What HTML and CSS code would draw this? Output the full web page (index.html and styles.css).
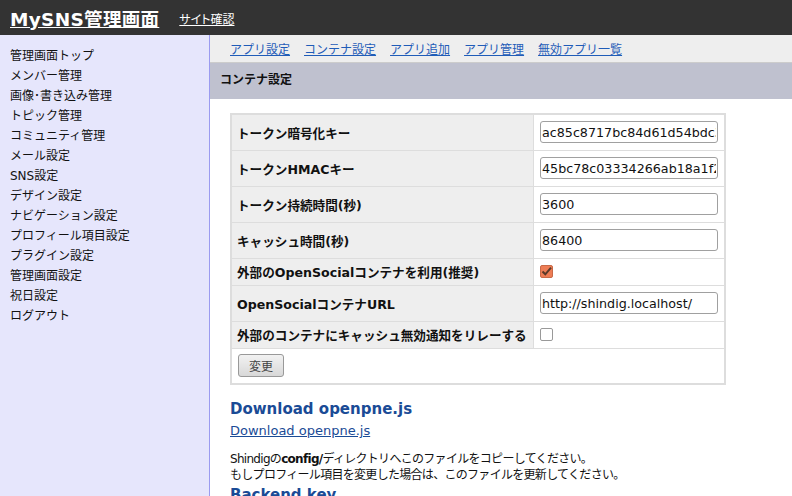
FILE: index.html
```html
<!DOCTYPE html>
<html lang="ja">
<head>
<meta charset="utf-8">
<link rel="stylesheet" href="styles.css">
</head>
<body>
<header class="topbar">
  <a class="brand" href="#">MySNS管理画面</a>
  <a class="sitelink" href="#">サイト確認</a>
</header>
<div class="layout">
  <nav class="side">
    <ul>
      <li><a href="#">管理画面トップ</a></li>
      <li><a href="#">メンバー管理</a></li>
      <li><a href="#">画像･書き込み管理</a></li>
      <li><a href="#" class="cur">トピック管理</a></li>
      <li><a href="#">コミュニティ管理</a></li>
      <li><a href="#">メール設定</a></li>
      <li><a href="#">SNS設定</a></li>
      <li><a href="#">デザイン設定</a></li>
      <li><a href="#">ナビゲーション設定</a></li>
      <li><a href="#">プロフィール項目設定</a></li>
      <li><a href="#">プラグイン設定</a></li>
      <li><a href="#">管理画面設定</a></li>
      <li><a href="#">祝日設定</a></li>
      <li><a href="#">ログアウト</a></li>
    </ul>
  </nav>
  <main class="main">
    <div class="subnav">
      <a href="#">アプリ設定</a>
      <a href="#">コンテナ設定</a>
      <a href="#">アプリ追加</a>
      <a href="#">アプリ管理</a>
      <a href="#">無効アプリ一覧</a>
    </div>
    <h2 class="pagetitle">コンテナ設定</h2>
    <div class="content">
      <table class="form">
        <tr><th>トークン暗号化キー</th><td><input class="txt" type="text" value="ac85c8717bc84d61d54bdc3f0a"></td></tr>
        <tr><th>トークンHMACキー</th><td><input class="txt" type="text" value="45bc78c03334266ab18a1f2e90"></td></tr>
        <tr><th>トークン持続時間(秒)</th><td><input class="txt" type="text" value="3600"></td></tr>
        <tr><th>キャッシュ時間(秒)</th><td><input class="txt" type="text" value="86400"></td></tr>
        <tr class="chk"><th>外部のOpenSocialコンテナを利用(推奨)</th><td><span class="box on"><svg width="13" height="13" viewBox="0 0 13 13"><path d="M2.5 6.5 L5.3 9.3 L11 2.6" fill="none" stroke="#5a3a2a" stroke-width="2"/></svg></span></td></tr>
        <tr><th>OpenSocialコンテナURL</th><td><input class="txt" type="text" value="http://shindig.localhost/"></td></tr>
        <tr class="chk"><th>外部のコンテナにキャッシュ無効通知をリレーする</th><td><span class="box"></span></td></tr>
        <tr class="submit"><td colspan="2"><button class="btn" type="button">変更</button></td></tr>
      </table>
      <h3 class="sub">Download openpne.js</h3>
      <p class="dl"><a href="#">Download openpne.js</a></p>
      <p class="note">Shindigの<b>config/</b>ディレクトリへこのファイルをコピーしてください。<br>もしプロフィール項目を変更した場合は、このファイルを更新してください。</p>
      <h3 class="sub">Backend key</h3>
    </div>
  </main>
</div>
</body>
</html>
```
FILE: styles.css
```css
html, body { margin: 0; padding: 0; }
body {
  font-family: "DejaVu Sans", "Noto Sans CJK JP", sans-serif;
  font-size: 12px;
  color: #111;
  background: #fff;
  overflow: hidden;
  height: 496px;
}
.topbar {
  height: 35px;
  background: #333333;
  display: flex;
  align-items: center;
  padding-left: 10px;
  box-sizing: border-box;
}
.brand {
  color: #fff;
  font-size: 18.5px;
  font-weight: bold;
  text-decoration: underline;
  letter-spacing: 0.3px;
  margin-right: 20px;
}
.sitelink {
  color: #fff;
  font-size: 12px;
  text-decoration: underline;
  margin-top: 2px;
  font-feature-settings: "palt";
}
.layout {
  display: flex;
  height: 461px;
}
.side {
  width: 209px;
  background: #e6e6fc;
  border-right: 1px solid #9b9bf0;
  flex-shrink: 0;
}
.side ul {
  list-style: none;
  margin: 0;
  padding: 11px 0 0 10px;
}
.side li {
  height: 20px;
  line-height: 20px;
}
.side a {
  color: #111;
  text-decoration: none;
  font-size: 12px;
}
.side a.cur::first-letter { color: #8a1010; }
.main {
  flex: 1;
  min-width: 0;
}
.subnav {
  height: 27px;
  background: #eeeeee;
  border-bottom: 1px solid #cccccc;
  display: flex;
  align-items: center;
  gap: 14px;
  padding-left: 20px;
}
.subnav a {
  color: #1f5cb8;
  font-size: 12px;
  text-decoration: underline;
  white-space: nowrap;
}
.pagetitle {
  margin: 0;
  height: 36px;
  line-height: 34px;
  background: #bfc1cf;
  font-size: 12px;
  font-weight: bold;
  padding-left: 10px;
}
.content {
  padding: 14px 20px 0 20px;
}
.form {
  border-collapse: collapse;
  border: 2px solid #dddddd;
  width: 496px;
}
.form th, .form td {
  border: 1px solid #dddddd;
  height: 36px;
  box-sizing: border-box;
  padding: 0 6px;
}
.form th {
  background: #eeeeee;
  text-align: left;
  font-size: 12.6px;
  font-weight: bold;
  width: 304px;
  padding: 0 4px 0 5px;
  white-space: nowrap;
}
.form td { padding-left: 6px; }
.form tr.chk th, .form tr.chk td { height: 27px; }
.form tr.submit td { height: 36px; background: #fff; }
.txt {
  width: 178px;
  height: 22px;
  box-sizing: border-box;
  border: 1px solid #a0a0a0;
  border-radius: 3px;
  font-family: "DejaVu Sans", sans-serif;
  font-size: 12.7px;
  padding: 0 1px;
  color: #111;
  display: block;
}
.box {
  display: block;
  width: 13px;
  height: 13px;
  box-sizing: border-box;
  border: 1px solid #999;
  border-radius: 2px;
  background: #fff;
  position: relative;
}
.box.on {
  background: #ee7d55;
  border-color: #c86a48;
}
.box svg { position: absolute; left: -1px; top: -1px; }
.btn {
  font-family: "DejaVu Sans", "Noto Sans CJK JP", sans-serif;
  font-size: 12px;
  color: #444;
  background: linear-gradient(#f2f2f2, #d8d8d8);
  border: 1px solid #999;
  border-radius: 3px;
  height: 23px;
  padding: 0 10px;
}
.sub {
  margin: 15px 0 0 0;
  font-size: 15px;
  font-weight: bold;
  color: #1a4b96;
}
.dl {
  margin: 5px 0 0 0;
  font-size: 13px;
}
.dl a { color: #1a4b96; }
.note {
  margin: 13px 0 0 0;
  font-size: 12px;
  line-height: 16px;
  letter-spacing: -0.7px;
}
.note + .sub { margin-top: 3px; }
```
